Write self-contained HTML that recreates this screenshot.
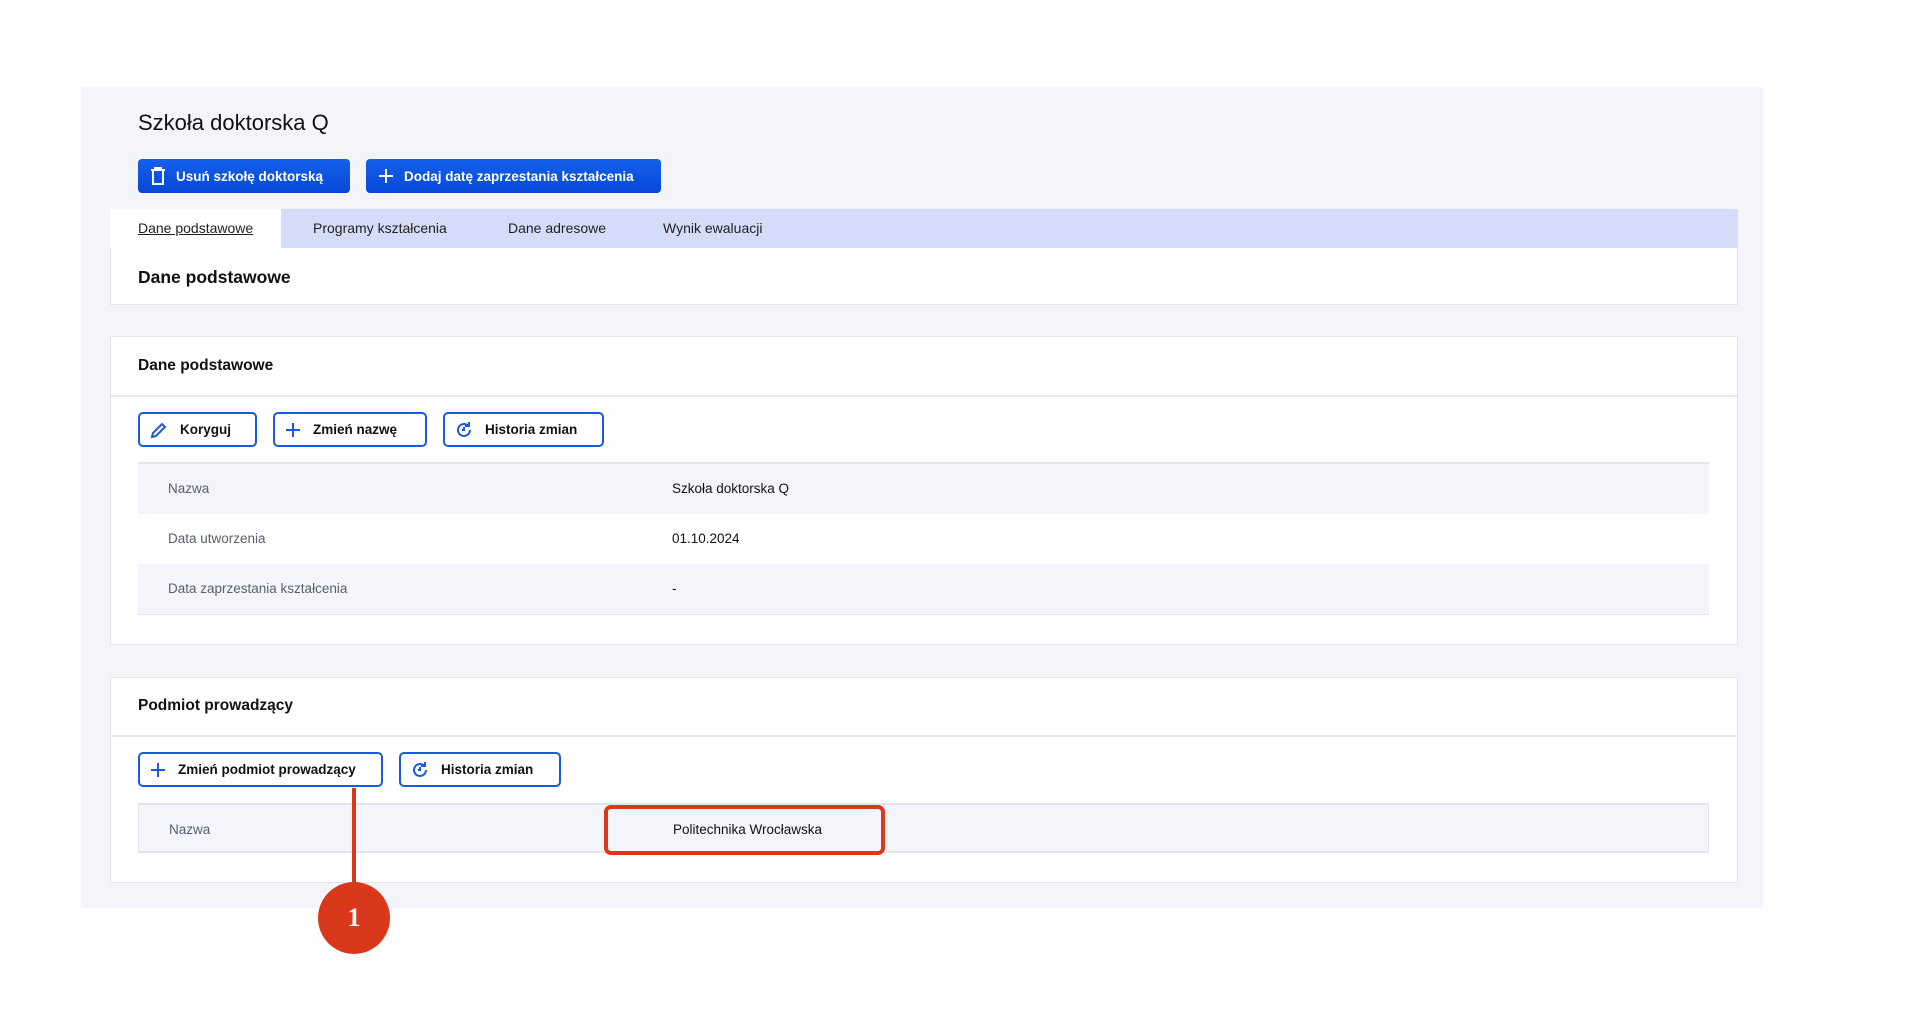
<!DOCTYPE html>
<html><head><meta charset="utf-8"><style>
*{box-sizing:border-box;margin:0;padding:0}
body{width:1919px;height:1019px;background:#fff;font-family:"Liberation Sans",sans-serif;color:#111;position:relative;overflow:hidden}
.abs{position:absolute}
.panel{left:81px;top:87px;width:1682px;height:821px;background:#f4f5fa}
.title{left:138px;top:110px;font-size:22px}
.bbtn{top:159px;height:34px;background:linear-gradient(#1560ea,#0748d8);border-radius:4px;color:#fff;font-size:13.5px;font-weight:bold;display:flex;align-items:center;padding-left:12px}
.bbtn svg{margin-right:10px}
.tabs{left:110px;top:209px;width:1628px;height:39px;background:#d5dcfa}
.tab{top:209px;height:39px;font-size:14px;line-height:39px;color:#222}
.box{background:#fff;border:1px solid #e3e5ec;left:110px;width:1628px}
.h{font-size:15.5px;font-weight:bold;color:#111}
.obtn{height:35px;border:2px solid #1a5ae0;border-radius:5px;background:#fff;font-size:13.5px;font-weight:bold;display:flex;align-items:center;padding-left:10px;color:#111}
.obtn svg{margin-right:12px}
.row{left:138px;width:1571px;height:50px;font-size:13.5px;line-height:50px}
.row .l{position:absolute;left:30px;color:#5a5e6e}
.row .v{position:absolute;left:534px;color:#111}
.g{background:#f4f5fa}
</style></head><body>
<div class="abs panel"></div>
<div class="abs title">Szkoła doktorska Q</div>
<div class="abs bbtn" style="left:138px;width:212px"><svg width="16" height="18" viewBox="0 0 16 18" fill="none" stroke="#fff" stroke-width="2"><path d="M1 3h14M5 3V1h6v2M3 3v14h10V3"/></svg>Usuń szkołę doktorską</div>
<div class="abs bbtn" style="left:366px;width:295px"><svg width="16" height="16" viewBox="0 0 16 16" stroke="#fff" stroke-width="2"><path d="M8 1v14M1 8h14"/></svg>Dodaj datę zaprzestania kształcenia</div>
<div class="abs tabs"></div>
<div class="abs" style="left:110px;top:209px;width:171px;height:39px;background:#fff"></div>
<div class="abs tab" style="left:138px;text-decoration:underline">Dane podstawowe</div>
<div class="abs tab" style="left:313px">Programy kształcenia</div>
<div class="abs tab" style="left:508px">Dane adresowe</div>
<div class="abs tab" style="left:663px">Wynik ewaluacji</div>
<div class="abs box" style="top:248px;height:57px;border-top:none"></div>
<div class="abs h" style="left:138px;top:267px;font-size:17.5px">Dane podstawowe</div>

<div class="abs box" style="top:336px;height:309px"></div>
<div class="abs h" style="left:138px;top:357px">Dane podstawowe</div>
<div class="abs" style="left:111px;top:395px;width:1626px;height:2px;background:#e6e8ee"></div>
<div class="abs obtn" style="left:138px;top:412px;width:119px"><svg width="18" height="18" viewBox="0 0 18 18" fill="none" stroke="#1a5ae0" stroke-width="2"><path d="M2 16l1-4L12 3l3 3-9 9z"/></svg>Koryguj</div>
<div class="abs obtn" style="left:273px;top:412px;width:154px"><svg width="16" height="16" viewBox="0 0 16 16" stroke="#1a5ae0" stroke-width="2"><path d="M8 1v14M1 8h14"/></svg>Zmień nazwę</div>
<div class="abs obtn" style="left:443px;top:412px;width:161px"><svg width="18" height="18" viewBox="0 0 18 18" fill="none" stroke="#1a5ae0" stroke-width="2"><path d="M15 9a6 6 0 1 1-2-4.5M14 1v4h-4M9 6v3H7"/></svg>Historia zmian</div>
<div class="abs" style="left:138px;top:462px;width:1571px;height:153px;border:1px solid #e3e5ec;border-top:2px solid #e3e5ec;border-bottom:2px solid #e3e5ec"></div>
<div class="abs row g" style="top:464px"><span class="l">Nazwa</span><span class="v">Szkoła doktorska Q</span></div>
<div class="abs row" style="top:514px;background:#fff"><span class="l">Data utworzenia</span><span class="v">01.10.2024</span></div>
<div class="abs row g" style="top:564px"><span class="l">Data zaprzestania kształcenia</span><span class="v">-</span></div>

<div class="abs box" style="top:677px;height:206px"></div>
<div class="abs h" style="left:138px;top:697px">Podmiot prowadzący</div>
<div class="abs" style="left:111px;top:735px;width:1626px;height:2px;background:#e6e8ee"></div>
<div class="abs obtn" style="left:138px;top:752px;width:245px"><svg width="16" height="16" viewBox="0 0 16 16" stroke="#1a5ae0" stroke-width="2"><path d="M8 1v14M1 8h14"/></svg>Zmień podmiot prowadzący</div>
<div class="abs obtn" style="left:399px;top:752px;width:162px"><svg width="18" height="18" viewBox="0 0 18 18" fill="none" stroke="#1a5ae0" stroke-width="2"><path d="M15 9a6 6 0 1 1-2-4.5M14 1v4h-4M9 6v3H7"/></svg>Historia zmian</div>
<div class="abs row g" style="top:803px;border:1px solid #e3e5ec;border-bottom:2px solid #e3e5ec;border-top:2px solid #e3e5ec"><span class="l">Nazwa</span><span class="v">Politechnika Wrocławska</span></div>
<div class="abs" style="left:604px;top:805px;width:281px;height:50px;border:4px solid #d9381a;border-radius:7px"></div>
<div class="abs" style="left:352px;top:788px;width:4px;height:100px;background:#d9381a"></div>
<div class="abs" style="left:318px;top:882px;width:72px;height:72px;border-radius:50%;background:#d9381a;color:#fff;font-family:'Liberation Serif',serif;font-weight:bold;font-size:26px;text-align:center;line-height:72px">1</div>
</body></html>
